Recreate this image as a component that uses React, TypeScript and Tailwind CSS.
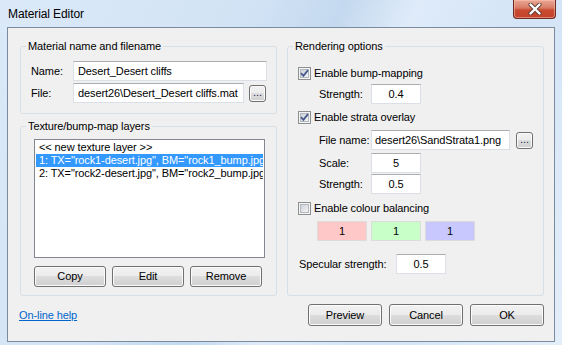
import React from "react"

const btn =
  "flex items-center justify-center rounded-[3px] border border-[#707070] bg-[linear-gradient(to_bottom,#f2f2f2_0%,#ebebeb_50%,#dddddd_50%,#cfcfcf_100%)] shadow-[inset_0_0_0_1px_#fbfbfb]"

const field =
  "h-[20px] bg-white border border-[#dbdfe6] border-t-[#abadb3] flex items-center whitespace-nowrap overflow-hidden"

function CheckBox({ checked }: { checked?: boolean }) {
  return (
    <svg width="13" height="13" viewBox="0 0 13 13" className="shrink-0">
      <defs>
        <linearGradient id="cbfill" x1="0" y1="0" x2="1" y2="1">
          <stop offset="0" stopColor="#cbcfd5" />
          <stop offset="1" stopColor="#f7f7f7" />
        </linearGradient>
      </defs>
      <rect x="0.5" y="0.5" width="12" height="12" fill="#f4f4f4" stroke="#8e8f8f" />
      <rect x="2.5" y="2.5" width="8" height="8" fill="url(#cbfill)" stroke="#b4b9bf" />
      {checked && (
        <path d="M3 6.2 L5.4 8.8 L10 3.2" fill="none" stroke="#4a5c8f" strokeWidth="1.9" />
      )}
    </svg>
  )
}

function Browse() {
  return (
    <div className={`${btn} w-[17px] h-[17px] text-[11px] leading-none pb-[2px] text-[#1c1c5c]`}>...</div>
  )
}

function Group({ title, className, children }: { title: string; className: string; children: React.ReactNode }) {
  return (
    <fieldset className={`rounded-[3px] border border-[#d5dfe5] ${className}`}>
      <legend className="ml-[5px] px-[2px] leading-[14px]">{title}</legend>
      {children}
    </fieldset>
  )
}

export default function App() {
  return (
    <div className="w-[562px] h-[345px] overflow-hidden flex flex-col text-[11px] tracking-[-0.1px] text-black font-['Liberation_Sans',Arial,sans-serif] bg-[linear-gradient(115deg,#dbe9f8_0%,#d2e3f5_35%,#c4d9ef_48%,#dfebf9_58%,#d3e4f6_75%,#e3eefa_100%)]">
      {/* title bar */}
      <div className="h-[27px] flex items-start shrink-0">
        <div className="pl-[8px] pt-[6px] leading-[16px] text-[12px] flex-1">Material Editor</div>
        <div className="mr-[6px] w-[43px] h-[19px] rounded-b-[4px] border border-t-0 border-[#6b2a20] bg-[linear-gradient(to_bottom,#e9a894_0%,#d77a64_45%,#c94b31_55%,#c2422a_100%)] shadow-[inset_0_0_0_1px_rgba(255,200,190,0.5)] flex items-center justify-center">
          <svg width="14" height="12" viewBox="0 0 14 12">
            <path d="M2.5 1.5 L11.5 10.5 M11.5 1.5 L2.5 10.5" stroke="#5b3a34" strokeWidth="4" strokeLinecap="round" />
            <path d="M2.5 1.5 L11.5 10.5 M11.5 1.5 L2.5 10.5" stroke="#ffffff" strokeWidth="2.4" strokeLinecap="round" />
          </svg>
        </div>
      </div>

      {/* client area */}
      <div className="mx-[7px] mb-[3px] flex-1 border border-[#7a8ba0] bg-[#f0f0f0] pt-[11px] pl-[12px] pr-[10px] flex flex-col">
        <div className="flex gap-[10px] h-[257px]">
          <div className="w-[257px] flex flex-col gap-[5px]">
            <Group title="Material name and filename" className="h-[75px]">
              <div className="pt-[8px] pl-[10px] flex flex-col gap-[2px]">
                <div className="flex items-center h-[20px]">
                  <div className="w-[42px] whitespace-nowrap">Name:</div>
                  <div className={`${field} w-[194px] pl-[4px]`}>Desert_Desert cliffs</div>
                </div>
                <div className="flex items-center h-[20px]">
                  <div className="w-[42px] whitespace-nowrap">File:</div>
                  <div className={`${field} w-[171px] pl-[4px]`}>desert26\Desert_Desert cliffs.mat</div>
                  <div className="ml-[5px]">
                    <Browse />
                  </div>
                </div>
              </div>
            </Group>

            <Group title="Texture/bump-map layers" className="h-[177px]">
              <div className="pt-[6px] pl-[13px]">
                <div className="w-[231px] h-[119px] border border-[#828790] bg-white p-[1px] overflow-hidden">
                  <div className="h-[13px] leading-[13px] pl-[3px] whitespace-nowrap">&lt;&lt; new texture layer &gt;&gt;</div>
                  <div className="h-[13px] leading-[13px] pl-[3px] whitespace-nowrap bg-[#3399ff] text-white overflow-hidden">
                    1: TX="rock1-desert.jpg", BM="rock1_bump.jpg"
                  </div>
                  <div className="h-[13px] leading-[13px] pl-[3px] whitespace-nowrap overflow-hidden">
                    2: TX="rock2-desert.jpg", BM="rock2_bump.jpg"
                  </div>
                </div>
                <div className="mt-[8px] flex gap-[6px]">
                  <div className={`${btn} w-[72px] h-[21px]`}>Copy</div>
                  <div className={`${btn} w-[72px] h-[21px]`}>Edit</div>
                  <div className={`${btn} w-[72px] h-[21px]`}>Remove</div>
                </div>
              </div>
            </Group>
          </div>

          <Group title="Rendering options" className="w-[257px] h-[257px]">
            <div className="pt-[13px] pl-[10px] flex flex-col">
              <div className="flex items-center gap-[3px] h-[14px]">
                <CheckBox checked />
                <span>Enable bump-mapping</span>
              </div>
              <div className="mt-[4px] pl-[21px] flex items-center h-[20px]">
                <div className="w-[52px] whitespace-nowrap">Strength:</div>
                <div className={`${field} w-[50px] justify-center`}>0.4</div>
              </div>
              <div className="mt-[6px] flex items-center gap-[3px] h-[14px]">
                <CheckBox checked />
                <span>Enable strata overlay</span>
              </div>
              <div className="mt-[6px] pl-[21px] flex items-center h-[20px]">
                <div className="w-[52px] whitespace-nowrap">File name:</div>
                <div className={`${field} w-[139px] pl-[3px]`}>desert26\SandStrata1.png</div>
                <div className="ml-[6px]">
                  <Browse />
                </div>
              </div>
              <div className="mt-[3px] pl-[21px] flex items-center h-[20px]">
                <div className="w-[52px] whitespace-nowrap">Scale:</div>
                <div className={`${field} w-[50px] justify-center`}>5</div>
              </div>
              <div className="mt-[1px] pl-[21px] flex items-center h-[20px]">
                <div className="w-[52px] whitespace-nowrap">Strength:</div>
                <div className={`${field} w-[50px] justify-center`}>0.5</div>
              </div>
              <div className="mt-[7px] flex items-center gap-[3px] h-[14px]">
                <CheckBox />
                <span>Enable colour balancing</span>
              </div>
              <div className="mt-[6px] pl-[19px] flex gap-[4px]">
                <div className="w-[50px] h-[20px] border border-[#dcdcdc] bg-[#ffc8c8] flex items-center justify-center">1</div>
                <div className="w-[50px] h-[20px] border border-[#dcdcdc] bg-[#c8ffc8] flex items-center justify-center">1</div>
                <div className="w-[50px] h-[20px] border border-[#dcdcdc] bg-[#c8c8ff] flex items-center justify-center">1</div>
              </div>
              <div className="mt-[13px] pl-[1px] flex items-center h-[20px]">
                <div className="w-[97px] whitespace-nowrap">Specular strength:</div>
                <div className={`${field} w-[50px] justify-center`}>0.5</div>
              </div>
            </div>
          </Group>
        </div>

        <div className="mt-[8px] h-[22px] flex items-center">
          <span className="ml-[-1px] text-[#0066cc] underline">On-line help</span>
          <div className="ml-auto flex gap-[7px]">
            <div className={`${btn} w-[74px] h-[22px]`}>Preview</div>
            <div className={`${btn} w-[74px] h-[22px]`}>Cancel</div>
            <div className={`${btn} w-[74px] h-[22px] border-[#3c7fb1] shadow-[inset_0_0_0_1px_#aee0f6,inset_0_0_0_2px_#e2f4fc]`}>OK</div>
          </div>
        </div>
      </div>
    </div>
  )
}
